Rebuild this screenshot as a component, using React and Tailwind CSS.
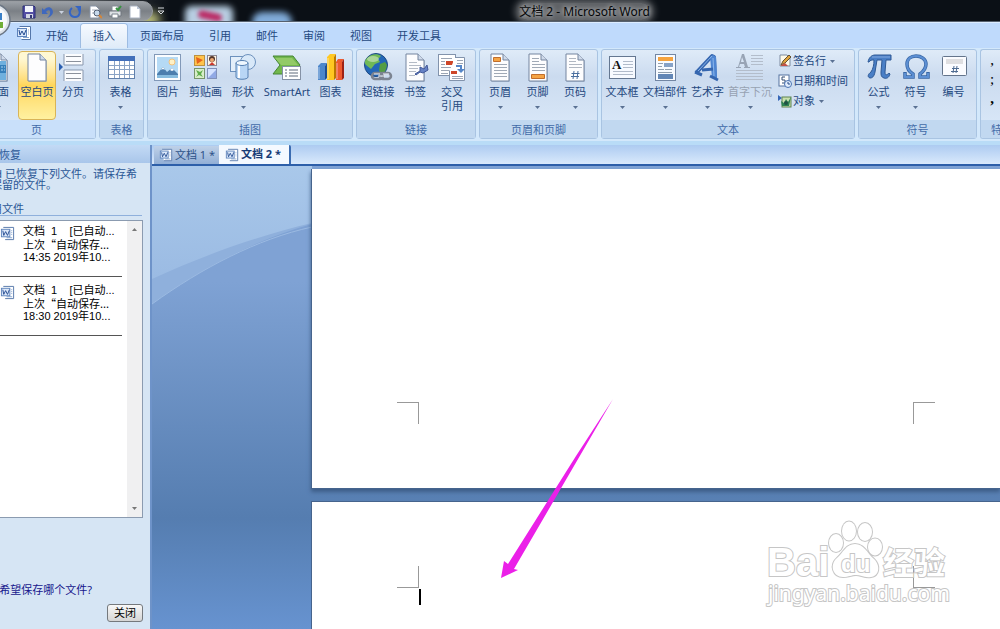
import React from "react";

const page = "M6 1H18L24 7V28H6Z";
const fold = "M18 1V7H24";

function Svg({ size = 30, box = 30, children, className = "" }) {
  return (
    <svg width={size} height={size} viewBox={`0 0 ${box} ${box}`} className={`shrink-0 ${className}`} aria-hidden="true">
      {children}
    </svg>
  );
}

function Sheet({ children }) {
  return (
    <Svg>
      <path d="M7 2H19L25 8V29H7Z" fill="#8ba0bd" opacity=".5" />
      <path d={page} fill="#fdfdfe" stroke="#74859f" />
      <path d={fold} fill="#cfdaea" stroke="#74859f" />
      {children}
    </Svg>
  );
}

const icons = {
  cover: (
    <Sheet>
      <path d="M7 3H17V8H23V27H7Z" fill="#6fb0de" />
      <path d="M7 12H23V20H7Z" fill="#357fba" />
      <path d="M9 14H22M9 17H22" stroke="#a9d6f2" strokeDasharray="2 1" />
    </Sheet>
  ),
  blank: <Sheet />,
  pageBreak: (
    <Svg>
      <path d="M6 1V12H25V1M6 28V17H25V28" fill="#fbfcfe" stroke="#8796ad" />
      <path d="M8 3.500H23M8 8.500H23M8 20.500H23M8 25.500H23" stroke="#8b919b" />
      <path d="M1 10L5 14L1 18Z" fill="#2b5fb0" />
    </Svg>
  ),
  table: (
    <Svg>
      <rect x="2.500" y="3.500" width="26" height="22" fill="#fff" stroke="#6080ac" />
      <rect x="2" y="3" width="27" height="5" fill="#426fba" />
      <path d="M3 12.500H28M3 16.500H28M3 21.500H28M8.500 8V25M13.500 8V25M18.500 8V25M23.500 8V25" stroke="#8aa3c5" />
    </Svg>
  ),
  picture: (
    <Svg>
      <rect x="1.500" y="1.500" width="26" height="26" fill="#fbfdff" stroke="#8299b8" />
      <rect x="4" y="4" width="21" height="21" fill="#b5daf5" />
      <circle cx="19" cy="9" r="3" fill="#fff1c6" stroke="#f3c27c" />
      <path d="M4 21L10 14L14 19L19 15L25 21V25H4Z" fill="#4c7eae" />
      <path d="M8 17L10 14L12 17L10 16ZM17 17L19 15L21 17L19 18Z" fill="#fff" />
      <path d="M4 22H25V25H4Z" fill="#87bcdf" />
    </Svg>
  ),
  clipart: (
    <Svg>
      <rect x="3.500" y="2.500" width="10" height="10" fill="#ffc34c" stroke="#bd9140" />
      <path d="M5 4L12 7L6 11Z" fill="#e6631c" />
      <rect x="16.500" y="2.500" width="9" height="10" fill="#fff3df" stroke="#8b8792" />
      <circle cx="21" cy="6" r="3" fill="#53352a" />
      <circle cx="21" cy="7" r="2" fill="#eba772" />
      <path d="M18 12L21 9L24 12Z" fill="#ca392e" />
      <rect x="3.500" y="15.500" width="10" height="10" fill="#d9eecb" stroke="#76946b" />
      <path d="M5 17L9 19L12 17L10 21L12 24L8 22L5 24L7 21Z" fill="#5ead4b" />
      <rect x="16.500" y="15.500" width="9" height="10" fill="#d4e2ff" stroke="#8191ba" />
      <path d="M17 25L25 17V25Z" fill="#91a9e5" />
    </Svg>
  ),
  shapes: (
    <Svg>
      <rect x="2.500" y="3.500" width="15" height="15" fill="#e4effa" stroke="#6d91bd" />
      <circle cx="20" cy="9" r="7.500" fill="#d8e8f8" stroke="#6d91bd" />
      <path d="M8 10V24C8 27 20 27 20 24V10Z" fill="#b9d6f5" stroke="#5680b2" />
      <path d="M11 12V25" stroke="#fff" strokeWidth="2" />
      <ellipse cx="14" cy="10" rx="6" ry="2.500" fill="#eef7ff" stroke="#5680b2" />
    </Svg>
  ),
  smartart: (
    <Svg>
      <path d="M1 3H21L28 12L21 21H1L8 12Z" fill="#72b74c" stroke="#448634" />
      <path d="M3 5H20L26 12H9Z" fill="#a5d477" opacity=".65" />
      <rect x="10.500" y="13.500" width="18" height="13" fill="#fff" stroke="#8592a6" />
      <path d="M13 17H15M13 20H15M13 23H15M17 17H26M17 20H26M17 23H26" stroke="#5f6a7a" />
    </Svg>
  ),
  chart: (
    <Svg>
      <path d="M2 13L5 10H11L9 13V27H2Z" fill="#4d87cb" />
      <path d="M9 13L11 10V25L9 27Z" fill="#204f92" />
      <path d="M11 4L14 1H20L18 4V27H11Z" fill="#ffc822" />
      <path d="M18 4L20 1V25L18 27Z" fill="#bb7800" />
      <path d="M20 9L22 6H28L26 9V27H20Z" fill="#ee5a30" />
      <path d="M26 9L28 6V25L26 27Z" fill="#9e2215" />
      <path d="M12 5V26M3 14V26M21 10V26" stroke="#fff" opacity=".5" />
    </Svg>
  ),
  link: (
    <Svg>
      <circle cx="13" cy="12" r="11.500" fill="#2367b7" stroke="#1d4983" />
      <path d="M4 5C8 1 14 0 18 3L15 6L17 9L12 11L8 16L3 12C1 10 2 7 4 5Z" fill="#70b956" />
      <path d="M17 11L22 9L24 12C23 17 22 20 18 22L16 17Z" fill="#549d43" />
      <ellipse cx="10" cy="6" rx="6" ry="3" fill="#fff" opacity=".4" />
      <rect x="9" y="20" width="11" height="6" rx="3" fill="none" stroke="#7c8491" strokeWidth="2.500" />
      <rect x="17" y="20" width="11" height="6" rx="3" fill="none" stroke="#7c8491" strokeWidth="2.500" />
      <path d="M11 21H17M20 21H26M15 23H22" stroke="#f1f3f7" />
    </Svg>
  ),
  bookmark: (
    <Sheet>
      <path d="M9 9.500H17M9 12.500H21M9 15.500H18M9 18.500H16M9 22.500H15" stroke="#b4bbc6" />
      <path d="M15 21L20 18L20 14L24 16L27 12L28 17L23 20L20 19L16 22Z" fill="#6581c4" stroke="#415899" />
    </Sheet>
  ),
  xref: (
    <Svg>
      <rect x="1.500" y="1.500" width="17" height="21" fill="#fff" stroke="#8293ac" />
      <path d="M4 5.500H15M4 8.500H8M4 11.500H8M4 14.500H15M4 17.500H15M4 20.500H11" stroke="#9ba5b4" />
      <path d="M9 8H16V12H9Z" fill="#ce4628" />
      <path d="M18 4.500H27.500V27.500H12.500V18" fill="#fff" stroke="#8293ac" />
      <path d="M20 7.500H26M20 10.500H26M15 23.500H26M15 25.500H26" stroke="#9ba5b4" />
      <path d="M14 18H20V21H14Z" fill="#ce4628" />
      <path d="M19 12H25V16H28L24 20L20 16H23V14H19Z" fill="#5586c8" />
    </Svg>
  ),
  header: (
    <Sheet>
      <path d="M8.500 4.500H15.500V8.500H8.500Z" fill="#f5a445" stroke="#c16e2c" />
      <path d="M9 11.500H22M9 14.500H22M9 17.500H22M9 20.500H22M9 23.500H22" stroke="#a0a9b6" />
    </Sheet>
  ),
  footer: (
    <Sheet>
      <path d="M9 5.500H16M9 8.500H16M9 11.500H22M9 14.500H22M9 17.500H22" stroke="#a0a9b6" />
      <path d="M8.500 21.500H21.500V25.500H8.500Z" fill="#f5a445" stroke="#c16e2c" />
    </Sheet>
  ),
  pageNumber: (
    <Sheet>
      <path d="M9 5.500H16M9 8.500H16M9 11.500H22M9 14.500H22" stroke="#b0b7c2" />
      <path d="M14 18L13 26M18 18L17 26M11.500 20.500H19.500M11 23.500H19" stroke="#496e9f" />
    </Sheet>
  ),
  textbox: (
    <Svg>
      <rect x="2.500" y="3.500" width="26" height="22" fill="#f7faff" stroke="#647791" />
      <text x="5" y="16" fontFamily="Liberation Serif, serif" fontWeight="bold" fontSize="13" fill="#111">A</text>
      <path d="M16 8.500H26M16 11.500H26M16 14.500H26M6 18.500H26M6 21.500H26" stroke="#b1bbca" />
    </Svg>
  ),
  parts: (
    <Svg>
      <rect x="5.500" y="1.500" width="20" height="26" fill="#f8fbff" stroke="#7286a3" />
      <rect x="8" y="4" width="15" height="4" fill="#f5a33e" />
      <path d="M8 10.500H13M8 13.500H12M8 16.500H14M15 16.500H22M8 19.500H22" stroke="#919fae" />
      <rect x="14" y="10" width="9" height="4" fill="#86a2c7" />
      <rect x="8" y="21" width="15" height="5" fill="#6387b6" />
    </Svg>
  ),
  wordart: (
    <Svg>
      <path d="M3 20L19 3L21 4L22 25" fill="none" stroke="#3566af" strokeWidth="4" strokeLinejoin="round" />
      <path d="M17 4L20 2L23 4L24 25H19Z" fill="#4f86d2" />
      <path d="M9 17L21 16M2 19L9 22M17 23L25 27" stroke="#3566af" strokeWidth="3" />
      <path d="M5 18L19 3M20 5L21 23" stroke="#8ab6ec" />
    </Svg>
  ),
  dropcap: (
    <Svg>
      <path d="M1 14H3L7 1H9L13 14H15V15H9V14H10L9 11H5L4 14H6V15H1ZM6 9H9L7 4Z" fill="#98a4b5" fillRule="evenodd" />
      <path d="M16 2.500H28M16 5.500H28M16 8.500H28M16 11.500H28M1 17.500H28M1 20.500H28M1 23.500H28M1 26.500H28" stroke="#b3bdcb" />
    </Svg>
  ),
  pi: (
    <Svg>
      <path d="M4 9C5 4 8 2 11 2H27V7H22L21 19C21 23 23 22 25 20L26 21C25 25 22 26 20 25C17 24 17 22 17 19L18 7H13L11 19C10 24 8 25 6 25C3 24 4 21 7 19C9 16 10 12 10 7C8 7 6 7 5 9Z" fill="#4a7fc6" stroke="#2e5995" />
      <path d="M8 4H26" stroke="#82aae0" />
    </Svg>
  ),
  omega: (
    <Svg>
      <path d="M4 19V24H12V21C7 18 6 15 6 11C6 6 10 3 15 3S25 6 25 11C25 15 23 18 19 21V24H27V19" fill="none" stroke="#3766a4" strokeWidth="3.500" />
      <path d="M4 20V24H12V21C7 18 6 15 6 11C6 6 10 3 15 3S25 6 25 11C25 15 23 18 19 21V24H27V20" fill="none" stroke="#5c8fd3" strokeWidth="2" />
    </Svg>
  ),
  number: (
    <Svg>
      <rect x="3.500" y="3.500" width="24" height="19" rx="1" fill="#fbfcff" stroke="#64758c" />
      <rect x="7" y="6" width="17" height="5" fill="#dfdfe1" />
      <path d="M15 13L14 20M18 13L17 20M13 15.500H20M12 18.500H19" stroke="#4e6b91" />
    </Svg>
  ),
};

function WordIcon({ size = 16 }) {
  return (
    <Svg size={size} box={16}>
      <path d="M3.500 1.500H14.500V14.500H5.500" fill="#fff" stroke="#5577aa" />
      <path d="M12 5H13M12 7H13M12 9H13M7 12.500H13" stroke="#86a4ce" />
      <rect x="1.500" y="3.500" width="9" height="8" fill="#dbe8fa" stroke="#5d83bb" />
      <path d="M3 5L4 10L6 6L8 10L10 5" fill="none" stroke="#244b90" />
    </Svg>
  );
}

function Caret({ className = "" }) {
  return (
    <svg width="5" height="3" viewBox="0 0 5 3" className={`shrink-0 ${className}`} aria-hidden="true">
      <path d="M0 0H5L2.500 3Z" fill="currentColor" />
    </svg>
  );
}

function Tool({ icon, label, second, width, menu, active, disabled }) {
  return (
    <button
      type="button"
      disabled={disabled}
      className={`flex h-[69px] shrink-0 flex-col items-center border pt-px ${width} ${
        active ? "rounded-sm border-[#d9b457] bg-linear-to-b from-[#fff8d3] from-10% via-[#ffd65a] via-50% to-[#fff1a0]" : "border-transparent"
      } ${disabled ? "text-[#97a2b2]" : "text-[#25497f]"}`}
    >
      {icons[icon]}
      <span className="mt-0.5 text-[11px] leading-[14px] whitespace-nowrap">{label}</span>
      {second && <span className="text-[11px] leading-[14px]">{second}</span>}
      {menu && <Caret className="mt-[7px] text-[#5a7193]" />}
    </button>
  );
}

function Group({ title, children, hot, last }) {
  return (
    <section
      className={`flex h-[90px] flex-col rounded-[3px] border border-[#a9c4e2] bg-linear-to-b from-[#dfebf8] from-0% via-[#cbdbef] via-30% to-[#dceafa] ${
        hot ? "rounded-l-none border-l-0" : ""
      } ${last ? "min-w-0 flex-1 overflow-hidden rounded-r-none border-r-0" : "shrink-0"}`}
    >
      <div className={`flex flex-1 pt-px ${hot ? "pr-[5px]" : "pr-[3px] pl-px"}`}>{children}</div>
      <h2
        className={`h-[18px] text-[11px] leading-[19px] font-normal whitespace-nowrap text-[#416ba8] ${hot ? "bg-[#c9e0fa] pr-[22px]" : "bg-[#c1d8f0]"} ${
          last ? "pl-2.5" : "text-center"
        }`}
      >
        {title}
      </h2>
    </section>
  );
}

function SmallTool({ children, label, menu }) {
  return (
    <button type="button" className="flex h-5 items-center text-[11px] leading-4 whitespace-nowrap text-[#25497f]">
      <Svg size={14} box={14}>{children}</Svg>
      <span className="ml-px">{label}</span>
      {menu && <Caret className="ml-1 text-[#5a7193]" />}
    </button>
  );
}

function QuickButton({ label, width = "w-5", children }) {
  return (
    <button type="button" aria-label={label} className={`flex h-5 items-center justify-center ${width}`}>
      <Svg size={14} box={14}>{children}</Svg>
    </button>
  );
}

function TitleBar() {
  return (
    <header className="relative flex h-[22px] shrink-0 items-center overflow-hidden border-b border-[#56616f] bg-[#0b1016]">
      <div className="absolute top-0 left-0 h-5 w-[170px] bg-linear-to-r from-[#747a82] via-[#565b60] to-[#0b1016]" />
      <div className="absolute top-3 left-[120px] h-4 w-10 rounded-full bg-[#b9bc7a] blur-[5px]" />
      <div className="absolute top-1.5 left-[185px] h-6 w-12 rounded-md bg-[#b8cee2] blur-[3px]" />
      <div className="absolute top-3 left-[198px] h-2 w-6 rotate-12 rounded-full bg-[#bb2c66] blur-[2px]" />
      <div className="absolute top-3 left-[252px] h-5 w-10 rounded-full bg-[#81acd9] blur-[3px]" />
      <div className="relative flex h-5 items-center rounded-r-full border border-[#999da2] bg-linear-to-b from-[#9a9fa5] via-[#7b8086] to-[#94989c] pt-[3px] pr-[7px] pl-[18px]">
        <QuickButton label="保存" width="w-[19px]">
          <path d="M1 1H12L13 2V13H1Z" fill="#544fa4" stroke="#282e75" />
          <rect x="3" y="1" width="8" height="6" fill="#f2f5fb" />
          <rect x="4" y="9" width="7" height="4" fill="#d3d7e4" />
          <rect x="8" y="10" width="2" height="3" fill="#323673" />
        </QuickButton>
        <QuickButton label="撤消" width="w-[19px]">
          <path d="M1 3V9H7L5 7C7 4 10 5 9 8C9 10 8 11 6 13C12 11 13 7 11 4C9 1 5 2 3 5Z" fill="#3f68bd" />
        </QuickButton>
        <button type="button" aria-label="撤消选项" className="flex w-2 justify-center text-[#cad2df]">
          <Caret />
        </button>
        <QuickButton label="重复">
          <path d="M4 3C0 6 2 12 7 12C12 12 13 6 10 4" fill="none" stroke="#3565c4" strokeWidth="2" />
          <path d="M7 1H13V7Z" fill="#3565c4" />
        </QuickButton>
        <QuickButton label="打印预览">
          <path d="M2 1H8L11 4V13H2Z" fill="#fff" stroke="#8793a5" />
          <path d="M4 5H8M4 8H6" stroke="#a8b0bd" />
          <circle cx="9" cy="8" r="3" fill="#c6d8ea" stroke="#515e72" />
          <path d="M11 10L14 13" stroke="#d3863b" strokeWidth="2" />
        </QuickButton>
        <QuickButton label="快速打印">
          <path d="M4 1H10V6H4Z" fill="#fff" stroke="#848b94" />
          <path d="M1 6H13V11H1Z" fill="#dce0e4" stroke="#70767e" />
          <path d="M4 9H10V13H4Z" fill="#fff" stroke="#7d858f" />
          <path d="M8 3L10 5L13 1" fill="none" stroke="#379340" strokeWidth="2" />
        </QuickButton>
        <QuickButton label="新建">
          <path d="M2 1H9L12 4V13H2Z" fill="#fff" stroke="#aab3c2" />
          <path d="M9 1V4H12" fill="#bac5d5" />
        </QuickButton>
      </div>
      <button type="button" aria-label="自定义快速访问工具栏" className="relative flex w-4 justify-center">
        <Svg size={8} box={8}>
          <path d="M1 1H7M1 4H7L4 7Z" fill="none" stroke="#d6d9dd" />
        </Svg>
      </button>
      <h1 className="flex-1 pt-[3px] text-center text-xs leading-5 font-normal text-[#050709]">
        <span className="rounded-full bg-white/35 leading-3 shadow-[0_0_7px_4px_rgba(255,255,255,0.35)] [text-shadow:0_0_5px_#ffffff]">
          文档 2 - Microsoft Word
        </span>
      </h1>
    </header>
  );
}

function RibbonTabs() {
  const tabs = ["开始", "插入", "页面布局", "引用", "邮件", "审阅", "视图", "开发工具"];
  return (
    <nav className="flex h-[26px] shrink-0 items-end border-t border-[#dcecff] bg-[#bfdafc] pl-4">
      <span className="flex h-6 w-[18px] items-center pb-1.5">
        <WordIcon />
      </span>
      <div className="flex gap-px">
        {tabs.map((tab) => (
          <button
            key={tab}
            type="button"
            className={`h-6 px-3 text-[11px] leading-[22px] whitespace-nowrap text-[#25497f] ${
              tab === "插入" ? "rounded-t-[3px] bg-linear-to-b from-[#f6faff] to-[#dfebf8] ring-1 ring-[#9dbce2]" : ""
            }`}
          >
            {tab}
          </button>
        ))}
      </div>
    </nav>
  );
}

function Ribbon() {
  return (
    <div className="flex shrink-0 gap-[3px] overflow-hidden border-b-4 border-[#b9dcf7] bg-[#d3e8fb] pt-px pb-[2px] shadow-[0_1px_0_#8caad0]">
      <Group title="页" hot>
        <div className="mr-[5px] flex w-[13px] justify-end overflow-hidden">
          <Tool icon="cover" label="封面" width="w-[30px]" menu />
        </div>
        <Tool icon="blank" label="空白页" width="w-[38px]" active />
        <Tool icon="pageBreak" label="分页" width="w-[34px]" />
      </Group>
      <Group title="表格">
        <Tool icon="table" label="表格" width="w-[39px]" menu />
      </Group>
      <Group title="插图">
        <Tool icon="picture" label="图片" width="w-[38px]" />
        <Tool icon="clipart" label="剪贴画" width="w-[37px]" />
        <Tool icon="shapes" label="形状" width="w-[38px]" menu />
        <Tool icon="smartart" label="SmartArt" width="w-[50px]" />
        <Tool icon="chart" label="图表" width="w-[37px]" />
      </Group>
      <Group title="链接">
        <Tool icon="link" label="超链接" width="w-[40px]" />
        <Tool icon="bookmark" label="书签" width="w-[34px]" />
        <Tool icon="xref" label="交叉" second="引用" width="w-[40px]" />
      </Group>
      <Group title="页眉和页脚">
        <Tool icon="header" label="页眉" width="w-[38px]" menu />
        <Tool icon="footer" label="页脚" width="w-[37px]" menu />
        <Tool icon="pageNumber" label="页码" width="w-[38px]" menu />
      </Group>
      <Group title="文本">
        <Tool icon="textbox" label="文本框" width="w-[38px]" menu />
        <Tool icon="parts" label="文档部件" width="w-[48px]" menu />
        <Tool icon="wordart" label="艺术字" width="w-[37px]" menu />
        <Tool icon="dropcap" label="首字下沉" width="w-[48px]" menu disabled />
        <div className="w-[77px] pl-1">
          <SmallTool label="签名行" menu>
            <path d="M2 1H9L12 4V12H2Z" fill="#fffae8" stroke="#7d8ba0" />
            <path d="M3 11L5 7L11 1L13 3L7 9Z" fill="#dfa33d" stroke="#655233" />
            <path d="M2 12L7 9L10 12Z" fill="#c55045" />
          </SmallTool>
          <SmallTool label="日期和时间">
            <rect x="1" y="1" width="10" height="11" fill="#fff" stroke="#5473a0" />
            <path d="M7 3H4V6H7V9H4" fill="none" stroke="#334c73" />
            <circle cx="10" cy="10" r="3.500" fill="#e2edfc" stroke="#4972b1" />
            <path d="M10 8V10H12" fill="none" stroke="#254b89" />
          </SmallTool>
          <SmallTool label="对象" menu>
            <path d="M0 1L4 4L0 7Z" fill="#3567b7" />
            <rect x="4" y="3" width="9" height="10" fill="#c8dfae" stroke="#5e8451" />
            <path d="M3 7L6 9L8 5L10 8L13 3L11 12H4Z" fill="#2e8352" />
            <circle cx="8" cy="9" r="2" fill="#1f5245" />
          </SmallTool>
        </div>
      </Group>
      <Group title="符号">
        <Tool icon="pi" label="公式" width="w-[37px]" menu />
        <Tool icon="omega" label="符号" width="w-[37px]" menu />
        <Tool icon="number" label="编号" width="w-[39px]" />
      </Group>
      <Group title="特殊符号" last>
        <div className="flex flex-col pl-2 font-['Liberation_Serif',serif] text-[15px] leading-[19px] text-black">
          <button type="button">,</button>
          <button type="button">;</button>
          <button type="button" className="font-bold">,</button>
        </div>
      </Group>
    </div>
  );
}

function Recovered({ time }) {
  return (
    <li className="mr-[5px] h-[59px] border-b border-[#555555]">
      <button type="button" className="flex w-full items-start pt-[7px] text-left font-['Liberation_Sans','Noto_Sans_CJK_SC',sans-serif] text-[11px] text-black">
        <span className="w-[23px] shrink-0 pt-px">
          <WordIcon size={15} />
        </span>
        <span className="leading-[13px] whitespace-pre">
          <span className="block">{"文档  1    [已自动..."}</span>
          <span className="block font-['Noto_Sans_CJK_SC',sans-serif]" lang="zh-CN">上次“自动保存...</span>
          <span className="block">{time}</span>
        </span>
      </button>
    </li>
  );
}

function RecoveryPane() {
  return (
    <aside className="flex w-[152px] shrink-0 flex-col overflow-hidden border-r-2 border-[#6e93c9] bg-[#d6e5f4] text-[11px] text-[#2b5796]">
      <h2 className="h-[18px] bg-linear-to-b from-[#c3daf5] to-[#a9c6ea] font-normal">
        <span className="flex w-[21px] justify-end leading-[20px] whitespace-nowrap">文档恢复</span>
      </h2>
      <p className="mt-[5px] leading-[11px] whitespace-nowrap">
        <span className="flex w-[137px] justify-end">Word 已恢复下列文件。请保存希</span>
        <span className="flex w-[57px] justify-end">望保留的文件。</span>
      </p>
      <h3 className="mt-[13px] mr-2 border-b border-[#8fb0dc] font-normal">
        <span className="flex w-6 justify-end leading-3 whitespace-nowrap">可用文件</span>
      </h3>
      <div className="mt-1 mr-[7px] flex h-[298px] border-y border-r border-[#8b9bb0] bg-white">
        <ul className="-mt-[3px] min-w-0 flex-1">
          <Recovered time="14:35 2019年10..." />
          <Recovered time="18:30 2019年10..." />
        </ul>
        <div className="flex w-[15px] flex-col items-center justify-between bg-[#f0f0f1] py-[7px] text-[#777777]">
          <button type="button" aria-label="向上滚动">
            <Caret className="rotate-180" />
          </button>
          <button type="button" aria-label="向下滚动">
            <Caret />
          </button>
        </div>
      </div>
      <p className="mt-16 text-[#17178c]">
        <span className="flex w-[92px] justify-end leading-4 whitespace-nowrap">您希望保存哪个文件?</span>
      </p>
      <button type="button" className="mt-1.5 mr-[7px] h-[18px] w-9 self-end rounded-[3px] border border-[#75797d] bg-linear-to-b from-[#f8f8f8] to-[#d5d5d5] leading-4 text-black">
        关闭
      </button>
    </aside>
  );
}

function DocumentArea() {
  return (
    <main className="flex min-w-0 flex-1 flex-col">
      <div className="flex h-[21px] shrink-0 items-end border-b-2 border-[#2d5fa9] bg-linear-to-b from-[#adcbf1] to-[#d9e9fb] pl-0.5 text-[11px]">
        <button type="button" className="flex h-[18px] w-[65px] items-center gap-0.5 bg-linear-to-b from-[#bfd1e8] to-[#92afd6] pl-[5px] whitespace-nowrap text-[#2d5288]">
          <WordIcon size={14} />
          文档 1 *
        </button>
        <button type="button" className="flex h-[19px] w-[72px] items-center gap-0.5 rounded-tr-xs border-r-2 border-[#3b6cb1] bg-[#f4f9ff] pl-1.5 font-bold whitespace-nowrap text-[#183c76]">
          <WordIcon size={14} />
          文档 2 *
        </button>
      </div>
      <div className="relative flex flex-1 flex-col overflow-hidden bg-linear-to-b from-[#7fa2d4] from-25% via-[#557db0] via-76% to-[#6793d0] pt-[3px] pl-[159px]">
        <svg className="absolute top-0 left-0" width="160" height="140" viewBox="0 0 160 140" aria-hidden="true">
          <defs>
            <linearGradient id="sky" x1="0" y1="0" x2="0" y2="1">
              <stop offset="0" stopColor="#a9c8ea" />
              <stop offset="1" stopColor="#9bbbe3" />
            </linearGradient>
          </defs>
          <path d="M0 0H160V58C105 73 50 102 0 138Z" fill="#8fb0dc" />
          <path d="M0 0H160V57C105 70 50 90 0 113Z" fill="url(#sky)" />
          <path d="M0 138C50 102 105 73 160 61" fill="none" stroke="#9bbae2" />
        </svg>
        <section className="relative flex h-[320px] shrink-0 items-end justify-between border-b border-l border-[#46648d] bg-white pr-[65px] pb-16 pl-[85px] shadow-[0_3px_4px_#3d5d87]">
          <span className="h-[22px] w-[22px] border-t border-r border-[#999999]" />
          <span className="h-[22px] w-[22px] border-t border-l border-[#999999]" />
        </section>
        <section className="relative mt-3 flex-1 border-t border-l border-[#46648d] bg-white pt-16 pr-[65px] pl-[85px]">
          <div className="flex justify-between">
            <span className="h-[22px] w-[22px] border-r border-b border-[#999999]" />
            <span className="h-[22px] w-[22px] border-b border-l border-[#999999]" />
          </div>
          <div className="mt-px ml-[22px] h-4 w-0.5 bg-black" />
        </section>
        <svg className="pointer-events-none absolute top-[233px] left-[348px]" width="114" height="180" viewBox="0 0 114 180" aria-hidden="true">
          <path d="M113 0L14 170L18 171L1 179L4 162L8 165L76 57Z" fill="#eb20e8" />
        </svg>
        <svg className="pointer-events-none absolute right-[50px] bottom-[20px]" width="186" height="92" viewBox="0 0 186 92" fill="#ffffff" stroke="#c6c6c6" strokeWidth="2" paintOrder="stroke" role="img" aria-label="Baidu 经验">
          <ellipse cx="72" cy="26" rx="7" ry="9" />
          <ellipse cx="85" cy="14" rx="7" ry="9.500" />
          <ellipse cx="101" cy="15" rx="7" ry="9" />
          <ellipse cx="111" cy="30" rx="7" ry="8.500" />
          <path d="M91 27C82 27 79 36 73 41C65 48 69 60 79 60C85 60 87 58 92 58C97 58 100 61 107 60C115 59 117 49 110 42C103 36 100 27 91 27Z" />
          <text x="3" y="59" fontFamily="Liberation Sans, sans-serif" fontWeight="bold" fontSize="40">Bai</text>
          <text x="77" y="55" fontFamily="Liberation Sans, sans-serif" fontWeight="bold" fontSize="24">du</text>
          <text x="119" y="57" fontFamily="Noto Sans CJK SC, sans-serif" fontWeight="bold" fontSize="31">经验</text>
          <text x="4" y="84" fontFamily="Noto Sans, sans-serif" fontSize="21">jingyan.baidu.com</text>
        </svg>
      </div>
    </main>
  );
}

export default function App() {
  return (
    <div className="relative flex min-h-screen flex-col overflow-hidden bg-[#bfdafc] font-['Noto_Sans','Noto_Sans_CJK_SC',sans-serif]">
      <TitleBar />
      <RibbonTabs />
      <Ribbon />
      <div className="flex flex-1">
        <RecoveryPane />
        <DocumentArea />
      </div>
      <button type="button" aria-label="Office 按钮" className="absolute top-1 left-0">
        <svg width="12" height="34" viewBox="0 0 12 34" aria-hidden="true">
          <circle cx="-6" cy="16" r="16" fill="#dce2e9" stroke="#6b7684" strokeWidth="1.500" />
          <circle cx="-6" cy="16" r="13" fill="#f7f9fb" />
          <path d="M-2 9H2V16H-2Z" fill="#397fc7" />
          <path d="M-2 18H3V24H-2Z" fill="#6fae36" />
        </svg>
      </button>
    </div>
  );
}
